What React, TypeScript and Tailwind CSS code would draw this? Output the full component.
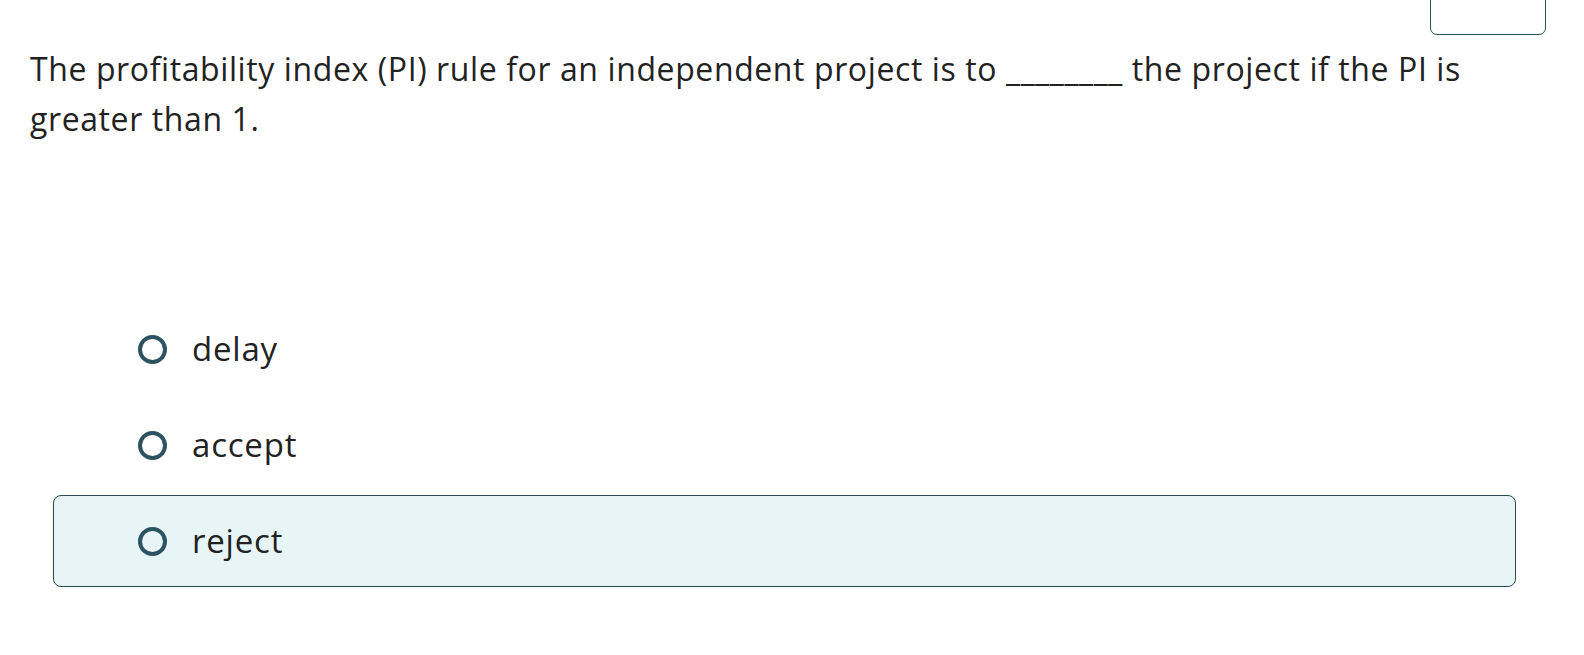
import React from "react";

const options = [
  { label: "delay", selected: false },
  { label: "accept", selected: false },
  { label: "reject", selected: true },
];

export default function App() {
  return (
    <div className="w-full h-[655px] bg-white overflow-hidden text-[#222222]" style={{ fontFamily: "'Open Sans', 'Noto Sans', sans-serif" }}>
      <div className="flex justify-end pr-[38px]">
        <div className="w-[116px] h-[40px] -mt-[5px] border-[1.5px] border-[#2c4f5b] rounded-b-[7px]"></div>
      </div>
      <p className="pl-[30px] pr-[90px] mt-[9px] text-[32px] tracking-[0.6px] leading-[50px]">
        The profitability index (PI) rule for an independent project is to ________ the project if the PI is greater than 1.
      </p>
      <div className="mt-[159px] pl-[53px] pr-[68px] flex flex-col gap-[4px]">
        {options.map((o) => (
          <div
            key={o.label}
            className={
              "h-[92px] flex items-center pl-[84px] rounded-[8px] border-[1.5px] " +
              (o.selected ? "bg-[#e8f5f7] border-[#2c4a55]" : "border-transparent")
            }
          >
            <span className="w-[29px] h-[29px] rounded-full border-[4px] border-[#2b5361] shrink-0"></span>
            <span className="ml-[25px] text-[33px] tracking-[0.8px]">{o.label}</span>
          </div>
        ))}
      </div>
    </div>
  );
}
